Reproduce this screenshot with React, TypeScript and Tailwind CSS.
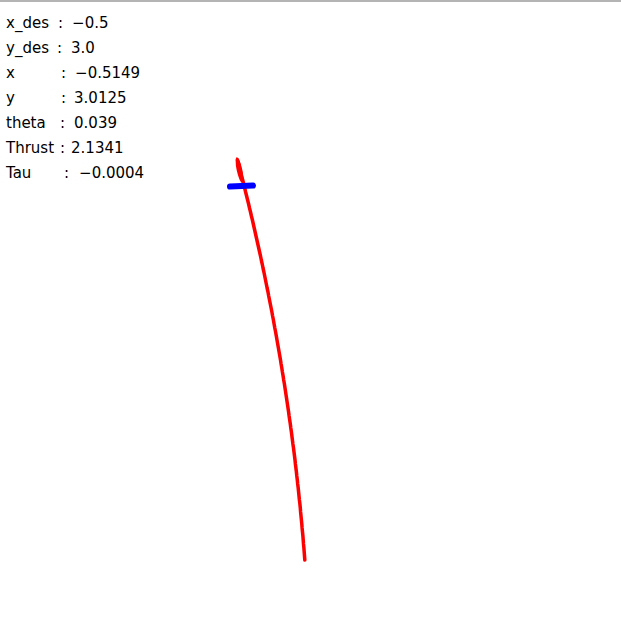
const rows = [
  { label: "x_des", lw: "w-[52px]", vw: "ml-[9px]", value: "−0.5" },
  { label: "y_des", lw: "w-[51px]", vw: "ml-[9px]", value: "3.0" },
  { label: "x", lw: "w-[55px]", vw: "ml-[9px]", value: "−0.5149" },
  { label: "y", lw: "w-[55px]", vw: "ml-[8px]", value: "3.0125" },
  { label: "theta", lw: "w-[54px]", vw: "ml-[9px]", value: "0.039" },
  { label: "Thrust", lw: "w-[54px]", vw: "ml-[6px]", value: "2.1341" },
  { label: "Tau", lw: "w-[58px]", vw: "ml-[10px]", value: "−0.0004" },
];

// trajectory, fitted x(y) through the traced points
const traj: string[] = [];
for (let y = 160; y <= 563; y += 4) {
  const x = 189.78 + 0.33563 * y - 0.0002326 * y * y;
  traj.push(`${x.toFixed(1)},${y}`);
}

export default function App() {
  return (
    <div className="relative w-[621px] h-[620px] bg-white border-t-2 border-[#b4b4b4] overflow-hidden">
      <svg className="absolute left-0 -top-[2px]" width={621} height={620}>
        <polyline
          points={traj.join(" ")}
          fill="none"
          stroke="#ff0000"
          strokeWidth={3.5}
          strokeLinejoin="round"
          strokeLinecap="round"
        />
        {/* thick tip at the start of the path */}
        <ellipse
          cx={239.5}
          cy={170}
          rx={2.8}
          ry={13}
          transform="rotate(-12 239.5 170)"
          fill="#ff0000"
        />
        {/* drone body */}
        <line
          x1={230}
          y1={186.6}
          x2={253}
          y2={185.6}
          stroke="#0000ff"
          strokeWidth={6}
          strokeLinecap="round"
        />
      </svg>

      <div
        className="relative pl-[6px] pt-[9px] text-[15px] leading-[25px] text-black"
        style={{ fontFamily: '"DejaVu Sans", sans-serif' }}
      >
        {rows.map((r) => (
          <div key={r.label} className="flex whitespace-pre">
            <span className={r.lw}>{r.label}</span>
            <span>:</span>
            <span className={r.vw}>{r.value}</span>
          </div>
        ))}
      </div>
    </div>
  );
}
